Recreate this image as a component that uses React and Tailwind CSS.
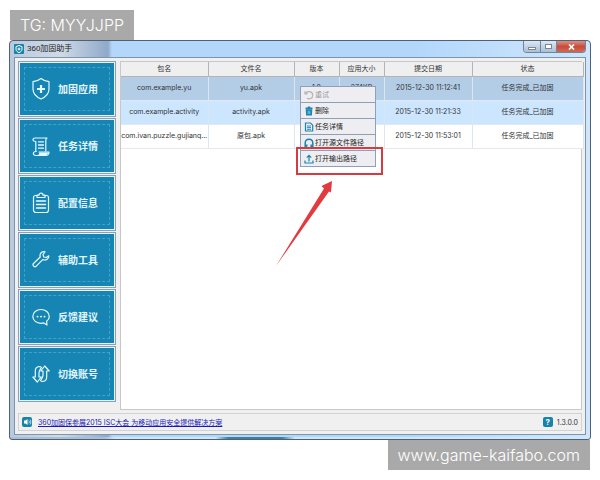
import React from 'react';

const menu = [
  { label: '加固应用', icon: 'shield' },
  { label: '任务详情', icon: 'scroll' },
  { label: '配置信息', icon: 'clipboard' },
  { label: '辅助工具', icon: 'wrench' },
  { label: '反馈建议', icon: 'chat' },
  { label: '切换账号', icon: 'swap' },
];

const tasks = [
  { pkg: 'com.example.yu', file: 'yu.apk', version: '1.0', size: '274KB', date: '2015-12-30 11:12:41', row: 'bg-[#b3cde7]' },
  { pkg: 'com.example.activity', file: 'activity.apk', date: '2015-12-30 11:21:33', row: 'bg-[#cde6ff]' },
  { pkg: 'com.ivan.puzzle.gujianq...', file: '原包.apk', date: '2015-12-30 11:53:01', row: 'bg-white' },
];

const columns = [
  { title: '包名', width: 'w-[87px]' },
  { title: '文件名', width: 'w-[86px]' },
  { title: '版本', width: 'w-[45px]' },
  { title: '应用大小', width: 'w-[45px]' },
  { title: '提交日期', width: 'w-[88px]' },
  { title: '状态', width: 'w-[111px]' },
];

const actions = [
  { label: '重试', icon: 'retry', disabled: true },
  { label: '删除', icon: 'trash' },
  { label: '任务详情', icon: 'doc' },
  { label: '打开源文件路径', icon: 'inbox' },
  { label: '打开输出路径', icon: 'upload' },
];

function SideIcon({ name }) {
  return (
    <svg
      className="h-6 w-[18px] shrink-0"
      viewBox="0 0 18 24"
      fill="none"
      stroke="#e6fbff"
      strokeWidth="1.2"
      strokeLinejoin="round"
      strokeLinecap="round"
    >
      {name === 'shield' && (
        <>
          <path d="M9 1.5C6.8 3.3 4 4.4 1 4.7V12c0 4.8 3.4 8 8 10 4.6-2 8-5.2 8-10V4.7C14 4.4 11.2 3.3 9 1.5Z" />
          <path d="M9 8v8M5 12h8" strokeWidth="2.2" strokeLinecap="butt" />
        </>
      )}
      {name === 'scroll' && (
        <>
          <path d="M3.8 17.5V7.5C1.5 7.5 1 6.5 1 5.5S1.8 4 3 4h12c-1 .5-1.2 1.3-1.2 2.5V17" />
          <path d="M6.5 7.8h5M6.5 11h5M6.5 14.2h5" strokeWidth="1.3" />
          <path d="M7 18h10c0 2-1.5 3.5-3.5 3.5H4c-3.5 0-3.5-4 0-4" />
          <path d="M7.5 18.5h9l-2 2.7H6.3z" fill="#e6fbff" stroke="none" />
        </>
      )}
      {name === 'clipboard' && (
        <>
          <path d="M5 4.5H3.5a2 2 0 0 0-2 2V19A2.5 2.5 0 0 0 4 21.500h10a2.500 2.500 0 0 0 2.500-2.500V6.500a2 2 0 0 0-2-2H13" />
          <path d="M5 6.5V4.2h2C7 1.5 11 1.5 11 4.2h2v2.3Z" />
          <path d="M4.5 10h9M4.5 13.5h9M4.5 17h9" strokeWidth="1.5" />
        </>
      )}
      {name === 'wrench' && (
        <path d="M16.800 7.800 14.300 9.500 11.800 9 11 6.500 13 3.800C10 3 7.300 5.500 8.200 9L1.500 15.500c-1.500 1.700.9 4.200 2.700 2.700l6.500-6.500c3.500 1 6.300-1 6.100-3.900Z" />
      )}
      {name === 'chat' && (
        <>
          <path d="M9 4.5C4.5 4.5 .8 7.5 .8 11.5S4.5 18.3 9 18.3c1 0 2-.1 2.800-.4L15 20l-.4-3.700C16.200 15.200 17.300 13.500 17.300 11.500 17.300 7.500 13.500 4.500 9 4.500Z" />
          <path d="M5.500 11.600h.1M9 11.600h.1M12.500 11.600h.1" strokeWidth="1.9" />
        </>
      )}
      {name === 'swap' && (
        <>
          <path d="M9.500 5.500C9 4.600 8 4.500 7.200 4.500 4.500 4.800 3.300 6.500 3.300 9v6H.8l4.500 5 4-5H7V10.500c0-1.500.8-2.500 2.500-5Z" />
          <path d="M8.500 18.500c.5.9 1.500 1 2.300 1 2.700-.3 3.900-2 3.900-4.500V9h2.500L12.700 4l-4 5H11v4.500c0 1.500-.8 2.500-2.500 5Z" />
        </>
      )}
    </svg>
  );
}

function ActionIcon({ name }) {
  return (
    <svg
      className="h-[10px] w-[10px] shrink-0"
      viewBox="0 0 10 10"
      fill="none"
      stroke={name === 'retry' ? '#b4b4b4' : '#1785ad'}
      strokeWidth="1.2"
    >
      {name === 'retry' && <path d="M1 1.200v2.600h2.600M1.300 3.700C3 .5 8.700 1 8.700 5.200 8.700 8.600 5 9.600 3 8" />}
      {name === 'trash' && (
        <>
          <path d="M1.5 2.3h7M3.8 1.2h2.4" strokeWidth="1.4" />
          <path d="M2.3 3.8h5.4L7.3 9H2.7z" fill="#1785ad" />
          <path d="M4.2 4.8V8M5.8 4.8V8" stroke="#dcebf2" strokeWidth=".6" />
        </>
      )}
      {name === 'doc' && (
        <>
          <path d="M1.5 1h5L8.7 3.2V9H1.5z" />
          <path d="M3 4h4M3 5.6h4M3 7.3h4" strokeWidth=".9" />
        </>
      )}
      {name === 'inbox' && <path d="M2.800 8.500H1.200V5.200C1.200-.2 8.800-.2 8.800 5.200v3.300H7.200V6.500M2.800 8.500V6.500" strokeWidth="1.5" />}
      {name === 'upload' && <path d="M5 7.500V1.500M2.800 3.600 5 1.300l2.200 2.300M1 6.500V9h8V6.500" />}
    </svg>
  );
}

function Sidebar() {
  return (
    <nav className="flex w-[98px] shrink-0 flex-col gap-px pb-2">
      {menu.map((item) => (
        <button
          key={item.label}
          type="button"
          className="h-14 border border-[#8aa0b4] bg-[#e4f2fb] p-px"
        >
          <span className="flex h-full bg-[#1685b4] p-1">
            <span className="flex flex-1 items-center gap-2 border border-dashed border-[#43a2c8] pl-[7px] text-[10px] leading-none font-bold text-[#e2f6fc]">
              <SideIcon name={item.icon} />
              {item.label}
            </span>
          </span>
        </button>
      ))}
    </nav>
  );
}

function TaskTable() {
  return (
    <table className="w-full table-fixed border-collapse text-center text-[7px] whitespace-nowrap text-[#333]">
      <thead>
        <tr className="h-[14px] bg-[#efefef]">
          {columns.map((col) => (
            <th key={col.title} className={`${col.width} border-r border-b border-[#b4b4b4] p-0 leading-none font-normal`}>
              {col.title}
            </th>
          ))}
        </tr>
      </thead>
      <tbody>
        {tasks.map((task) => (
          <tr key={task.date} className={`${task.row} h-6 border-b border-[#e4e9ef]`}>
            <td className="border-r border-[#dbe6f1] p-0">{task.pkg}</td>
            <td className="border-r border-[#dbe6f1] p-0">{task.file}</td>
            <td className="border-r border-[#dbe6f1] p-0">{task.version}</td>
            <td className="border-r border-[#dbe6f1] p-0">{task.size}</td>
            <td className="border-r border-[#dbe6f1] p-0">{task.date}</td>
            <td className="border-r border-[#dbe6f1] p-0">任务完成_已加固</td>
          </tr>
        ))}
      </tbody>
    </table>
  );
}

function ContextMenu() {
  return (
    <div className="absolute top-6 left-[179px] w-[76px]">
      <div className="flex flex-col border border-b-0 border-[#8e9fb6]">
        {actions.map((action) => (
          <button
            key={action.label}
            type="button"
            disabled={action.disabled}
            className="flex h-4 items-center gap-px border-b border-[#8e9fb6] bg-[#eeeef2] pl-[3px] text-[7px] leading-none whitespace-nowrap text-[#222] disabled:text-[#999]"
          >
            <ActionIcon name={action.icon} />
            {action.label}
          </button>
        ))}
      </div>
      {/* highlight around the last entry, with its pointer */}
      <div className="absolute -bottom-2 -left-1 h-7 w-[87px] border-2 border-[#d93a3f]" />
      <svg className="absolute top-[94px] -left-6 h-[88px] w-14" viewBox="0 0 56 88">
        <path d="M0 86 48 8.500 45.500 6 56 1 55 12.500 53 11.500Z" fill="#e23b3f" />
      </svg>
    </div>
  );
}

function TitleBar() {
  return (
    <header className="flex h-4 items-start justify-between">
      <h1 className="flex items-center gap-[3px] pt-[3px] text-[8px] leading-none text-[#222]">
        <svg className="h-[10px] w-[10px]" viewBox="0 0 10 10">
          <rect width="10" height="10" rx="1" fill="#1683a9" />
          <path d="M5 1.5 8 2.6v2.6c0 1.7-1.2 2.7-3 3.5-1.8-.8-3-1.8-3-3.5V2.6z" fill="none" stroke="#fff" />
          <path d="M5 3.5v3M3.5 5h3" stroke="#fff" />
        </svg>
        360加固助手
      </h1>
      <div className="flex h-3 overflow-hidden rounded-b-sm border border-t-0 border-[#71859b]">
        <button type="button" aria-label="最小化" className="flex w-[17px] items-center justify-center border-r border-[#71859b] bg-linear-to-b from-[#dce8f4] to-[#a9bfd6]">
          <span className="mt-1 h-[3px] w-2 border border-[#7c8794] bg-white" />
        </button>
        <button type="button" aria-label="最大化" className="flex w-4 items-center justify-center border-r border-[#71859b] bg-linear-to-b from-[#dce8f4] to-[#a9bfd6]">
          <span className="h-[5px] w-[7px] border border-[#7c8794] bg-white" />
        </button>
        <button type="button" aria-label="关闭" className="flex w-7 items-center justify-center bg-linear-to-b from-[#dd8f84] via-[#c9493b] to-[#cf6a52]">
          <svg className="h-[6px] w-[7px]" viewBox="0 0 7 6" stroke="#fff" strokeWidth="1.7">
            <path d="M1 .5 6 5.5M6 .5 1 5.5" />
          </svg>
        </button>
      </div>
    </header>
  );
}

function StatusBar() {
  return (
    <footer className="mt-[3px] flex h-[18px] items-center justify-between border border-[#d2d2d2] px-[3px] text-[7px] leading-none">
      <div className="flex items-center gap-[6px]">
        <svg className="h-[10px] w-[10px]" viewBox="0 0 10 10">
          <rect width="10" height="10" rx="2" fill="#1683a9" />
          <path d="M2 3.5h1.5L5.5 2v6L3.5 6.5H2z" fill="#fff" />
          <path d="M6.7 3.5c.8.8.8 2.2 0 3M8 2.5c1.2 1.5 1.2 3.5 0 5" fill="none" stroke="#fff" strokeWidth=".7" />
        </svg>
        <a href="#isc" className="text-[#1a1ab8] underline">
          360加固保参展2015 ISC大会 为移动应用安全提供解决方案
        </a>
      </div>
      <div className="flex items-center gap-1 text-[#333]">
        <button type="button" aria-label="帮助" className="h-[10px] w-[10px] rounded-[2px] bg-[#1683a9] text-[8px] leading-none font-bold text-white">
          ?
        </button>
        1.3.0.0
      </div>
    </footer>
  );
}

export default function App() {
  return (
    <div className="flex min-h-screen flex-col items-start bg-white px-[9px] pt-[10px] font-['Liberation_Sans','Noto_Sans_CJK_SC',sans-serif]">
      <div className="ml-px bg-[#a9a9a9] px-[10px] font-['Inter',sans-serif] text-[16px] leading-[30px] font-light text-white">
        TG: MYYJJPP
      </div>

      <div className="w-full rounded-t-[4px] rounded-b-[3px] border border-[#4d6179] [background:linear-gradient(90deg,#a9bfd6_0,#a9bfd6_95px,#cfe8f8_105px,#cfe8f8_205px,#3f8299_218px,#3f8299_272px,#cfe8f8_285px)_bottom/100%_2px_no-repeat,linear-gradient(90deg,#b9c9dd_0,#d0dae7_50px,#8fa9c9_98px,#b3d7fb_102px,#b3d7fb_70%,#cfe6fc_100%)] px-1 pb-1">
        <TitleBar />
        <main className="border border-[#7e94aa] bg-[#f0f0f0] px-[3px] pt-[3px] pb-[3px] font-['Inter','Noto_Sans_CJK_SC',sans-serif]">
          <div className="flex gap-1">
            <Sidebar />
            <section className="relative min-w-0 flex-1 border border-[#c8c8c8] bg-white">
              <TaskTable />
              <ContextMenu />
            </section>
          </div>
          <StatusBar />
        </main>
      </div>

      <div className="mr-px self-end bg-[#a9a9a9] px-[10px] font-['Inter',sans-serif] text-[16px] leading-[30px] font-light text-white">
        www.game-kaifabo.com
      </div>
    </div>
  );
}
